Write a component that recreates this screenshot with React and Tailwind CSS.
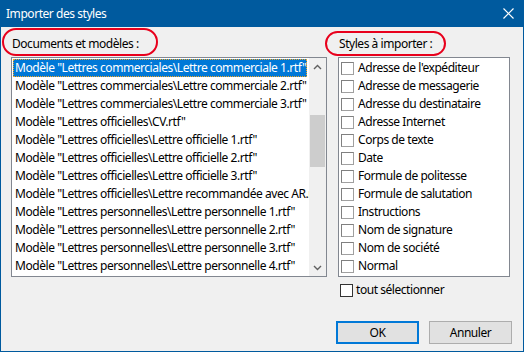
import React from 'react';

const documents = [
  'Modèle "Lettres commerciales\\Lettre commerciale 1.rtf"',
  'Modèle "Lettres commerciales\\Lettre commerciale 2.rtf"',
  'Modèle "Lettres commerciales\\Lettre commerciale 3.rtf"',
  'Modèle "Lettres officielles\\CV.rtf"',
  'Modèle "Lettres officielles\\Lettre officielle 1.rtf"',
  'Modèle "Lettres officielles\\Lettre officielle 2.rtf"',
  'Modèle "Lettres officielles\\Lettre officielle 3.rtf"',
  'Modèle "Lettres officielles\\Lettre recommandée avec AR.rtf"',
  'Modèle "Lettres personnelles\\Lettre personnelle 1.rtf"',
  'Modèle "Lettres personnelles\\Lettre personnelle 2.rtf"',
  'Modèle "Lettres personnelles\\Lettre personnelle 3.rtf"',
  'Modèle "Lettres personnelles\\Lettre personnelle 4.rtf"',
];

const styles = [
  "Adresse de l'expéditeur",
  'Adresse de messagerie',
  'Adresse du destinataire',
  'Adresse Internet',
  'Corps de texte',
  'Date',
  'Formule de politesse',
  'Formule de salutation',
  'Instructions',
  'Nom de signature',
  'Nom de société',
  'Normal',
];

const Chevron = ({ up }) => (
  <svg width="9" height="6" viewBox="0 0 9 6" className="text-[#606060]">
    <path d={up ? 'M1 5 L4.5 1.5 L8 5' : 'M1 1 L4.5 4.5 L8 1'} fill="none" stroke="currentColor" strokeWidth="1.4" />
  </svg>
);

export default function App() {
  return (
    <div
      className="w-[524px] h-[352px] flex flex-col bg-[#f0f0f0] border border-t-0 border-[#005a9e] text-[12px] tracking-[-0.45px] text-black overflow-hidden"
      style={{ fontFamily: '"Segoe UI", "Noto Sans", sans-serif' }}
    >
      {/* Title bar */}
      <div className="h-[27px] shrink-0 -mx-px bg-[#005a9e] flex items-center justify-between pl-[6px] pr-[10px] text-white">
        <span className="text-[12px]">Importer des styles</span>
        <svg width="11" height="11" viewBox="0 0 11 11">
          <path d="M0.5 0.5 L10.5 10.5 M10.5 0.5 L0.5 10.5" stroke="white" strokeWidth="1.2" />
        </svg>
      </div>

      <div className="flex-1 flex flex-col px-[10px]">
        <div className="flex gap-[11px]">
          {/* Left column */}
          <div className="w-[316px] flex flex-col">
            <div className="relative h-[30px] flex items-end pb-[4px] pl-[1px]">
              <span>Documents et modèles :</span>
              <div className="absolute left-[-9px] top-[1px] w-[156px] h-[28px] rounded-[14px] border-2 border-[#e8001c]" />
            </div>
            <div className="h-[220px] bg-white border border-[#828790] flex">
              <div className="flex-1 overflow-hidden pt-px pl-px">
                {documents.map((d, i) => (
                  <div
                    key={i}
                    className={`h-[18px] leading-[18px] pl-[2px] whitespace-nowrap ${
                      i === 0 ? 'bg-[#0078d7] text-white outline-1 outline-dotted outline-[#f5a623] -outline-offset-1 w-max' : ''
                    }`}
                  >
                    {d}
                  </div>
                ))}
              </div>
              <div className="w-[17px] bg-[#f0f0f0] flex flex-col items-center">
                <div className="h-[17px] flex items-center justify-center">
                  <Chevron up />
                </div>
                <div className="h-[40px]" />
                <div className="w-[15px] h-[52px] bg-[#cdcdcd]" />
                <div className="flex-1" />
                <div className="h-[17px] flex items-center justify-center">
                  <Chevron />
                </div>
              </div>
            </div>
          </div>

          {/* Right column */}
          <div className="w-[172px] flex flex-col">
            <div className="relative h-[30px] flex items-end pb-[4px] pl-[1px]">
              <span>Styles à importer :</span>
              <div className="absolute left-[-13px] top-[4px] w-[121px] h-[25px] rounded-[13px] border-2 border-[#e8001c]" />
            </div>
            <div className="h-[220px] bg-white border border-[#828790] pt-px">
              {styles.map((s) => (
                <div key={s} className="h-[18px] flex items-center gap-[4px] pl-[2px]">
                  <span className="w-[13px] h-[13px] border border-[#a0a0a0] border-t-[#808080] border-l-[#808080] bg-white shrink-0" />
                  <span>{s}</span>
                </div>
              ))}
            </div>
            <div className="mt-[4px] flex items-center gap-[3px] pl-[2px]">
              <span className="w-[13px] h-[13px] border border-[#333] bg-white shrink-0" />
              <span>tout sélectionner</span>
            </div>
          </div>
        </div>

        <div className="flex justify-end gap-[10px] mt-[22px] pr-[1px]">
          <button className="w-[83px] h-[23px] bg-[#e1e1e1] border-2 border-[#0078d7]">OK</button>
          <button className="w-[83px] h-[23px] bg-[#e1e1e1] border border-[#adadad]">Annuler</button>
        </div>
      </div>
    </div>
  );
}
